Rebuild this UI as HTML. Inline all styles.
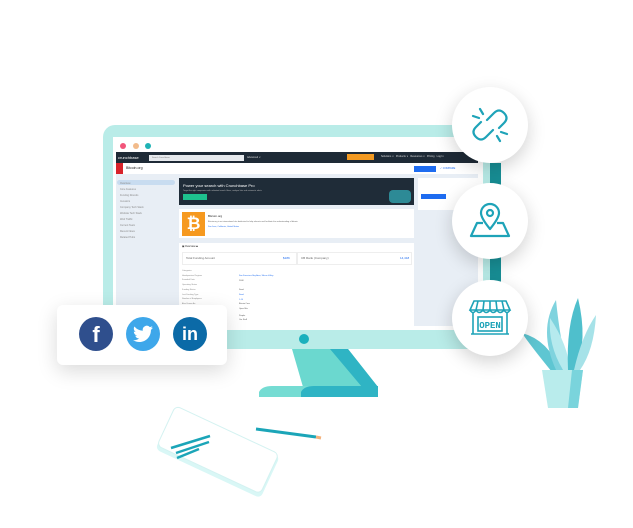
<!DOCTYPE html>
<html><head><meta charset="utf-8"><style>
body{margin:0;width:633px;height:528px;background:#fff;position:relative;overflow:hidden;font-family:"Liberation Sans",sans-serif}
.a{position:absolute}
.t{position:absolute;font-size:3px;color:#666;white-space:nowrap;line-height:1}
.circ{position:absolute;width:76px;height:76px;border-radius:50%;background:#fff;box-shadow:0 6px 18px rgba(0,0,0,.18)}
</style></head><body>
<svg class="a" style="left:0;top:0" width="633" height="528">
 <rect x="103" y="125" width="388" height="224" rx="12" fill="#b9ece8"/>
 <rect x="490" y="163" width="11" height="120" fill="#188f96"/>
 <rect x="113" y="137" width="370" height="193" fill="#fff"/>
 <circle cx="123" cy="146" r="3" fill="#f2557a"/>
 <circle cx="136" cy="146" r="3" fill="#f2bb8b"/>
 <circle cx="148" cy="146" r="3" fill="#1fb3b5"/>
 <circle cx="304" cy="339" r="5" fill="#1ab0bd"/>
 <polygon points="292,349 348,349 378,387 303,387" fill="#6bd8cf"/>
 <polygon points="330,349 348,349 378,387 362,387" fill="#2fb4c4"/>
 <path d="M259,397 L259,392 Q262,386 272,386 L378,386 L378,397 Z" fill="#75dcd3"/>
 <path d="M301,397 L301,392 Q304,386 314,386 L378,386 L378,397 Z" fill="#2fb4c4"/>
 <g transform="translate(218,452) rotate(25)">
  <rect x="-58" y="-22" width="116" height="46" rx="5" fill="#d9f7f6"/>
  <rect x="-58" y="-24" width="114" height="44" rx="5" fill="#fff" stroke="#d4f2f1" stroke-width="1"/>
 </g>
 <line x1="171" y1="448" x2="210" y2="436" stroke="#1ba5b8" stroke-width="2.5"/>
 <line x1="176" y1="453" x2="209" y2="442" stroke="#1ba5b8" stroke-width="2.5"/>
 <line x1="177" y1="458" x2="199" y2="449" stroke="#1ba5b8" stroke-width="2.5"/>
 <line x1="256" y1="429" x2="316" y2="437" stroke="#1ba5b8" stroke-width="3"/>
 <line x1="316" y1="437" x2="321" y2="438" stroke="#f4b27c" stroke-width="3"/>
 <path d="M552,372 Q530,345 522,333 Q548,340 560,370Z" fill="#5ec6d2"/>
 <path d="M556,370 Q538,330 556,300 Q560,340 568,370Z" fill="#7fd3de"/>
 <path d="M563,370 Q548,345 550,318 Q568,345 570,370Z" fill="#b6eaee"/>
 <path d="M568,370 Q566,325 578,298 Q588,340 576,370Z" fill="#4fbfcc"/>
 <path d="M574,370 Q582,335 596,315 Q594,350 580,370Z" fill="#a6e2e8"/>
 <polygon points="542,370 583,370 578,408 548,408" fill="#b9ecec"/>
 <polygon points="572,370 583,370 578,408 568,408" fill="#7ad4dc"/>
</svg>

<div class="a" style="left:116px;top:152px;width:362px;height:174px;background:#e8eef5;overflow:hidden">
 <div class="a" style="left:0;top:0;width:362px;height:11px;background:#1e2a36"></div>
 <div class="t" style="left:2px;top:4px;color:#fff;font-size:4px">crunchbase</div>
 <div class="a" style="left:33px;top:3px;width:95px;height:6px;background:#e6e9ed"></div>
 <div class="t" style="left:36px;top:5px;font-size:2px;color:#777">Search Crunchbase</div>
 <div class="t" style="left:131px;top:5px;color:#ddd;font-size:2.5px">Advanced ∨</div>
 <div class="a" style="left:231px;top:2px;width:27px;height:6px;background:#f39a22"></div>
 <div class="t" style="left:265px;top:4px;color:#ddd;font-size:2.5px">Solutions ∨ &nbsp; Products ∨ &nbsp; Resources ∨ &nbsp; Pricing &nbsp; Log In</div>
 <div class="a" style="left:0;top:11px;width:362px;height:11px;background:#fff"></div>
 <div class="a" style="left:0;top:11px;width:7px;height:11px;background:#d8232a"></div>
 <div class="t" style="left:10px;top:15px;color:#222;font-size:3.5px">Bitcoin.org</div>
 <div class="a" style="left:298px;top:14px;width:22px;height:6px;background:#1e6cf0"></div>
 <div class="t" style="left:324px;top:16px;color:#1e6cf0;font-size:2.5px">✓ COMPARE</div>
 <div class="a" style="left:1px;top:28px;width:58px;height:5px;background:#c8dcf0;border-radius:3px"></div>
 <div class="t" style="left:4px;top:29px;line-height:6px;font-size:2.5px;color:#888">Overview<br>Core Features<br>Funding Rounds<br>Investors<br>Company Tech Stack<br>Website Tech Stack<br>Web Traffic<br>Current Team<br>Recent News<br>Related Hubs</div>
 <div class="a" style="left:63px;top:26px;width:235px;height:27px;background:#1f2c38"></div>
 <div class="t" style="left:67px;top:32px;color:#fff;font-size:4px">Power your search with Crunchbase Pro</div>
 <div class="t" style="left:67px;top:38px;color:#bbb;font-size:2px">Target the right companies with unlimited search filters, analyze lists and automatic alerts</div>
 <div class="a" style="left:67px;top:42px;width:24px;height:6px;background:#1ec18e"></div>
 <div class="a" style="left:273px;top:38px;width:22px;height:13px;background:#2d8a96;border-radius:4px"></div>
 <div class="a" style="left:63px;top:57px;width:235px;height:29px;background:#fff"></div>
 <div class="a" style="left:66px;top:60px;width:23px;height:24px;background:#f6991f;color:#fff;font-size:17px;font-weight:bold;text-align:center;line-height:24px">₿</div>
 <div class="t" style="left:92px;top:63px;color:#222;font-size:3px">Bitcoin.org</div>
 <div class="t" style="left:92px;top:69px;font-size:2px">Bitcoin.org is an international site dedicated to help educate and facilitate the understanding of bitcoin</div>
 <div class="t" style="left:92px;top:74px;font-size:2px;color:#1e6cf0">San Jose, California, United States</div>
 <div class="a" style="left:63px;top:91px;width:235px;height:83px;background:#fff"></div>
 <div class="t" style="left:66px;top:94px;color:#222;font-size:2.5px">▣ Overview ■</div>
 <div class="a" style="left:66px;top:100px;width:113px;height:11px;border:1px solid #eee"></div>
 <div class="a" style="left:181px;top:100px;width:113px;height:11px;border:1px solid #eee"></div>
 <div class="t" style="left:70px;top:105px;font-size:3px">Total Funding Amount</div>
 <div class="t" style="left:167px;top:105px;font-size:3px;color:#1e6cf0">$18K</div>
 <div class="t" style="left:185px;top:105px;font-size:3px">CB Rank (Company)</div>
 <div class="t" style="left:284px;top:105px;font-size:3px;color:#1e6cf0">14,418</div>
 <div class="t" style="left:66px;top:117px;font-size:2px;line-height:4.7px;color:#888">Categories<br>Headquarters Regions<br>Founded Date<br>Operating Status<br>Funding Status<br>Last Funding Type<br>Number of Employees<br>Also Known As<br>Legal Name</div>
 <div class="t" style="left:123px;top:122px;font-size:2px;line-height:4.7px;color:#555"><span style="color:#1e6cf0">San Francisco Bay Area, Silicon Valley</span><br>2008<br><br>Seed<br><span style="color:#1e6cf0">Seed</span><br><span style="color:#1e6cf0">1-10</span><br>Bitcoin Core<br>Open Bits</div>
 <div class="t" style="left:123px;top:162px;font-size:2px;line-height:4px;color:#555">People<br>Our Staff</div>
 <div class="a" style="left:302px;top:26px;width:60px;height:32px;background:#fff"></div>
 <div class="a" style="left:305px;top:42px;width:25px;height:5px;background:#1e6cf0"></div>
</div>

<div class="circ" style="left:452px;top:87px"></div>
<div class="circ" style="left:452px;top:183px"></div>
<div class="circ" style="left:452px;top:280px"></div>
<svg class="a" style="left:452px;top:87px" width="76" height="76" fill="none" stroke="#1ea3b8" stroke-width="2.2" stroke-linecap="round">
 <path d="M35,33 L42,26 Q47,21 52,26 Q57,31 52,36 L47,41"/>
 <path d="M41,43 L34,50 Q29,55 24,50 Q19,45 24,40 L29,35"/>
 <path d="M31,27 L28,22 M27,31 L21,29 M45,49 L48,54 M49,45 L55,47"/>
</svg>
<svg class="a" style="left:452px;top:183px" width="76" height="76" fill="none" stroke="#1ea3b8" stroke-width="2.2" stroke-linejoin="round">
 <path d="M38,46 Q29,35 29,30 A9,9 0 0 1 47,30 Q47,35 38,46Z"/>
 <circle cx="38" cy="30" r="3"/>
 <path d="M31,40 L25,40 L19,53 L57,53 L51,40 L45,40"/>
</svg>
<svg class="a" style="left:452px;top:280px" width="76" height="76" fill="none" stroke="#1ea3b8" stroke-width="1.6">
 <path d="M22,21 L54,21 L58,30 L18,30 Z M26,21 L24,30 M32,21 L31,30 M38,21 L38,30 M44,21 L45,30 M50,21 L52,30"/>
 <path d="M18,30 Q21,35 24,30 Q27,35 31,30 Q34,35 38,30 Q41,35 45,30 Q48,35 52,30 Q55,35 58,30"/>
 <path d="M21,33 L21,54 M55,33 L55,54 M19,54 L57,54"/>
 <rect x="26" y="37" width="24" height="14"/>
 <text x="38" y="48" font-family="Liberation Mono,monospace" font-size="9" font-weight="bold" text-anchor="middle" fill="#1ea3b8" stroke="none">OPEN</text>
</svg>

<div class="a" style="left:57px;top:305px;width:170px;height:60px;background:#fff;border-radius:6px;box-shadow:0 6px 20px rgba(0,0,0,.15)"></div>
<div class="a" style="left:79px;top:317px;width:34px;height:34px;border-radius:50%;background:#2f4f8d;color:#fff;font-weight:bold;font-size:22px;text-align:center;line-height:36px">f</div>
<div class="a" style="left:126px;top:317px;width:34px;height:34px;border-radius:50%;background:#3ea7ea"></div>
<svg class="a" style="left:133px;top:325px" width="20" height="18" viewBox="0 0 24 20"><path fill="#fff" d="M24,2.4a9.8,9.8,0,0,1-2.8.8A4.9,4.9,0,0,0,23.3.5a9.900,9.900,0,0,1-3.1,1.2A4.9,4.9,0,0,0,11.8,6.1,14,14,0,0,1,1.7,1,4.9,4.9,0,0,0,3.2,7.6a4.9,4.9,0,0,1-2.2-.6,4.9,4.9,0,0,0,3.9,4.9,4.9,4.9,0,0,1-2.2.1,4.9,4.9,0,0,0,4.6,3.4A9.9,9.9,0,0,1,0,17.4,14,14,0,0,0,7.5,19.6c9.1,0,14-7.5,14-14V5A10,10,0,0,0,24,2.4Z"/></svg>
<div class="a" style="left:173px;top:317px;width:34px;height:34px;border-radius:50%;background:#0b6aa7;color:#fff;font-weight:bold;font-size:18px;text-align:center;line-height:35px">in</div>
</body></html>
